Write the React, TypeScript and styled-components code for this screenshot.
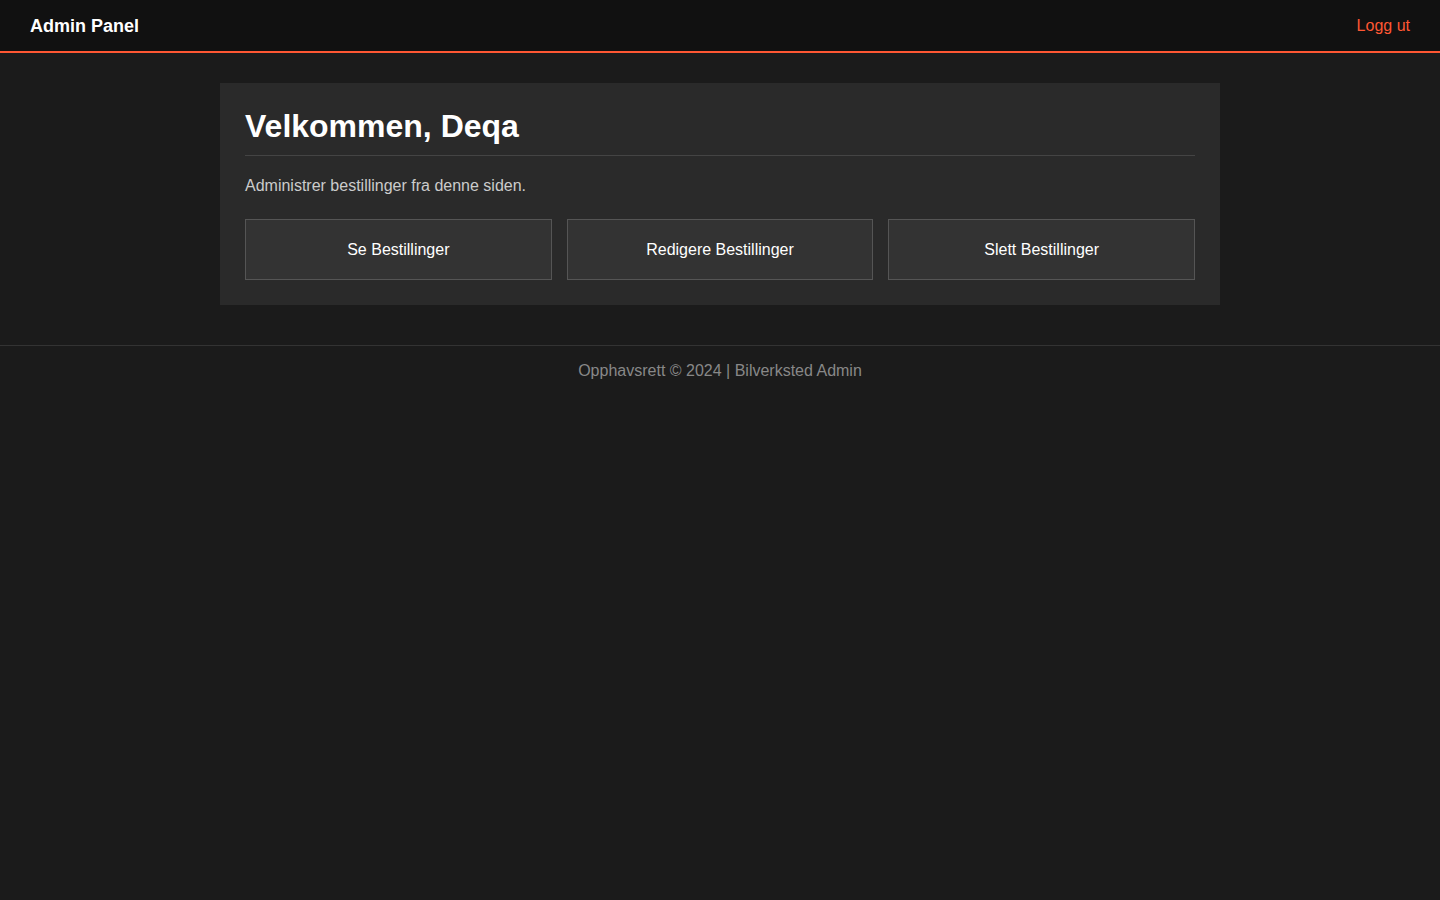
import styled, { createGlobalStyle } from 'styled-components';

const GlobalStyle = createGlobalStyle`
  html, body {
    margin: 0;
    padding: 0;
    background: #1b1b1b;
    font-family: "Liberation Sans", Arial, sans-serif;
    color: #fff;
  }
  * {
    box-sizing: border-box;
  }
`;

const Header = styled.header`
  display: flex;
  justify-content: space-between;
  align-items: center;
  height: 53px;
  padding: 0 30px;
  background: #111111;
  border-bottom: 2px solid #ff5733;
`;

const Brand = styled.div`
  padding-top: 2px;
  font-size: 18px;
  font-weight: bold;
  color: #fff;
`;

const LogoutLink = styled.a`
  font-size: 16px;
  color: #ff5733;
  text-decoration: none;
  cursor: pointer;
`;

const Main = styled.main`
  max-width: 1000px;
  margin: 30px auto 40px;
  padding: 25px;
  background: #2a2a2a;
`;

const Title = styled.h1`
  margin: 0;
  padding-bottom: 10px;
  font-size: 32px;
  line-height: 37px;
  border-bottom: 1px solid #444;
`;

const Intro = styled.p`
  margin: 21px 0 24px;
  font-size: 16px;
  line-height: 18px;
  color: #cccccc;
`;

const Actions = styled.div`
  display: grid;
  grid-template-columns: repeat(3, 1fr);
  gap: 15px;
`;

const ActionButton = styled.button`
  height: 61px;
  background: #333333;
  border: 1px solid #555555;
  color: #fff;
  font-family: inherit;
  font-size: 16px;
  cursor: pointer;
`;

const Footer = styled.footer`
  padding: 16px 0 14px;
  border-top: 1px solid #333;
  text-align: center;
  font-size: 16px;
  line-height: 18px;
  color: #888888;
`;

export default function App() {
  return (
    <>
      <GlobalStyle />
      <Header>
        <Brand>Admin Panel</Brand>
        <LogoutLink>Logg ut</LogoutLink>
      </Header>
      <Main>
        <Title>Velkommen, Deqa</Title>
        <Intro>Administrer bestillinger fra denne siden.</Intro>
        <Actions>
          <ActionButton>Se Bestillinger</ActionButton>
          <ActionButton>Redigere Bestillinger</ActionButton>
          <ActionButton>Slett Bestillinger</ActionButton>
        </Actions>
      </Main>
      <Footer>Opphavsrett © 2024 | Bilverksted Admin</Footer>
    </>
  );
}
